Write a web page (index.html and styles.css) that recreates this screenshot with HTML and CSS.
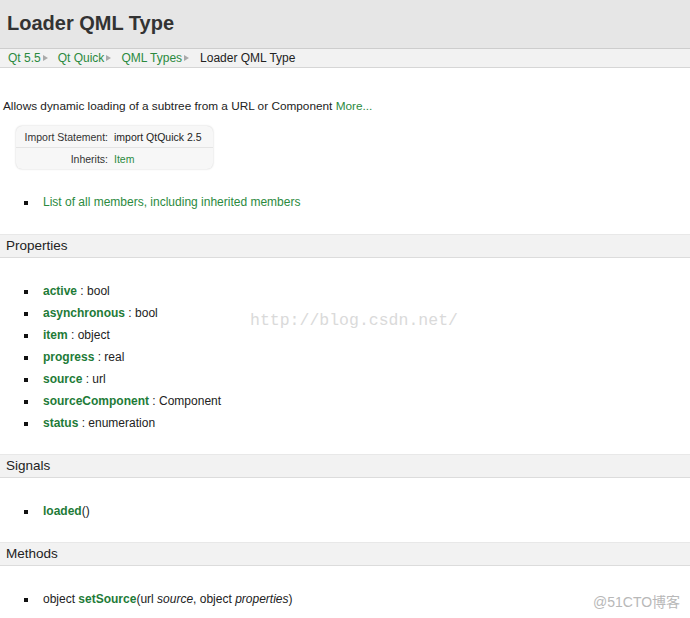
FILE: index.html
```html
<!DOCTYPE html>
<html>
<head>
<meta charset="utf-8">
<link rel="stylesheet" href="styles.css">
</head>
<body>
<header class="title-bar"><h1>Loader QML Type</h1></header>
<nav class="crumbs">
  <a class="crumb">Qt 5.5</a><span class="arrow"></span>
  <a class="crumb">Qt Quick</a><span class="arrow"></span>
  <a class="crumb">QML Types</a><span class="arrow"></span>
  <span class="crumb-current">Loader QML Type</span>
</nav>
<main class="content">
  <p class="brief">Allows dynamic loading of a subtree from a URL or Component <a class="link">More...</a></p>
  <table class="info">
    <tr><td class="lbl">Import Statement:</td><td class="val">import QtQuick 2.5</td></tr>
    <tr><td class="lbl">Inherits:</td><td class="val"><a class="link">Item</a></td></tr>
  </table>
  <ul class="items first-list">
    <li><a class="link">List of all members, including inherited members</a></li>
  </ul>
  <h2 class="section">Properties</h2>
  <ul class="items">
    <li><b class="name">active</b> : bool</li>
    <li><b class="name">asynchronous</b> : bool</li>
    <li><b class="name">item</b> : object</li>
    <li><b class="name">progress</b> : real</li>
    <li><b class="name">source</b> : url</li>
    <li><b class="name">sourceComponent</b> : Component</li>
    <li><b class="name">status</b> : enumeration</li>
  </ul>
  <h2 class="section">Signals</h2>
  <ul class="items">
    <li><b class="name">loaded</b>()</li>
  </ul>
  <h2 class="section">Methods</h2>
  <ul class="items">
    <li>object <b class="name">setSource</b>(url <i>source</i>, object <i>properties</i>)</li>
  </ul>
</main>
<div class="wm-csdn">http://blog.csdn.net/</div>
<div class="wm-51">@51CTO博客</div>
</body>
</html>
```
FILE: styles.css
```css
html, body {
  margin: 0;
  padding: 0;
  background: #fff;
}
body {
  font-family: "Liberation Sans", Arial, sans-serif;
  color: #222;
  position: relative;
  width: 690px;
  height: 618px;
  overflow: hidden;
}
.title-bar {
  height: 49px;
  background: #e6e6e6;
  border-bottom: 1px solid #cdcdcd;
  display: flex;
  align-items: center;
  padding-left: 7px;
  padding-bottom: 2px;
  box-sizing: border-box;
}
.title-bar h1 {
  margin: 0;
  font-size: 20px;
  font-weight: bold;
  color: #333;
}
.crumbs {
  height: 19px;
  background: #f2f2f2;
  border-bottom: 1px solid #d6d6d6;
  box-sizing: border-box;
  display: flex;
  align-items: center;
  padding-left: 8px;
  font-size: 12px;
}
.crumb { color: #2b8a3e; }
.arrow {
  width: 0; height: 0;
  border-left: 5px solid #aaa;
  border-top: 3.5px solid transparent;
  border-bottom: 3.5px solid transparent;
  margin: 0 10px 0 2px;
}
.crumb-current { color: #222; margin-left: 1px; }
.content { padding: 0; }
.brief {
  margin: 30px 0 0 3px;
  font-size: 11.8px;
  line-height: 16px;
}
.link { color: #2b8a3e; }
.info {
  margin: 12px 0 0 16px;
  width: 197px;
  border-collapse: separate;
  border-spacing: 0;
  background: #f7f7f7;
  border-radius: 6px;
  box-shadow: 0 0 2px #c8c8c8;
  font-size: 10.5px;
}
.info td { height: 21px; padding: 0; }
.info tr:first-child td { border-bottom: 1px solid #e4e4e4; }
.info .lbl { text-align: right; width: 92px; padding-right: 6px; color: #333; }
.info .val { color: #222; }
.items {
  list-style: none;
  margin: 0;
  padding: 0 0 0 43px;
  font-size: 12px;
}
.items li {
  position: relative;
  line-height: 22px;
  height: 22px;
}
.items li::before {
  content: "";
  position: absolute;
  left: -19px;
  top: 10px;
  width: 4px;
  height: 4px;
  background: #111;
}
.first-list { margin-top: 22px; margin-bottom: 1px; }
.name { color: #1e7b38; }
.section {
  margin: 21px 0 22px 0;
  height: 24px;
  box-sizing: border-box;
  background: #f2f2f2;
  border-top: 1px solid #e8e8e8;
  border-bottom: 1px solid #dcdcdc;
  font-size: 13.5px;
  font-weight: normal;
  line-height: 22px;
  padding-left: 6px;
  color: #222;
}
.section + .items { margin-bottom: -1px; }
.wm-csdn {
  position: absolute;
  left: 250px;
  top: 311px;
  font-family: "Liberation Mono", "DejaVu Sans Mono", monospace;
  font-size: 16.5px;
  color: #dadada;
}
.wm-51 {
  position: absolute;
  left: 593px;
  top: 591px;
  font-size: 14px;
  color: #b8b8b8;
  font-family: "Liberation Sans", "Noto Sans CJK SC", sans-serif;
}
```
